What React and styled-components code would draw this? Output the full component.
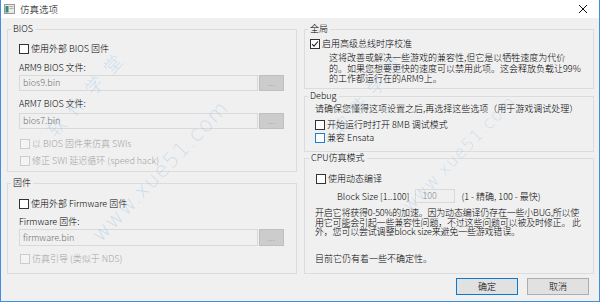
import React from "react";
import styled, { createGlobalStyle } from "styled-components";

const Global = createGlobalStyle`
  html, body { margin: 0; padding: 0; background: #ffffff; }
  body { font-family: "Noto Sans CJK SC", "Noto Sans", sans-serif; font-size: 9px; font-weight: 300; color: #000; }
  * { box-sizing: border-box; }
`;

const Window = styled.div`
  position: relative;
  width: 600px;
  height: 302px;
  border-left: 1px solid #3f8fdc;
  border-right: 1px solid #3f8fdc;
  border-bottom: 1px solid #3f8fdc;
  background: #f0f0f0;
  display: flex;
  flex-direction: column;
  overflow: hidden;
`;

const TitleBar = styled.div`
  height: 18px;
  background: #ffffff;
  display: flex;
  align-items: center;
  padding-left: 3px;
  flex: none;
`;

const TitleText = styled.span`
  margin-left: 5px;
  font-size: 9.5px;
  line-height: 18px;
  color: #000;
`;

const CloseBtn = styled.div`
  margin-left: auto;
  width: 30px;
  height: 18px;
  display: flex;
  align-items: center;
  justify-content: center;
  margin-right: 1px;
`;

const Body = styled.div`
  display: grid;
  grid-template-columns: 290px 290px;
  column-gap: 7px;
  padding: 11px 5px 0 6px;
`;

const Column = styled.div`
  display: flex;
  flex-direction: column;
`;

const Group = styled.div`
  border: 1px solid #dcdcdc;
  height: ${(p) => p.$h}px;
  margin-top: ${(p) => p.$mt || 0}px;
  display: flex;
  flex-direction: column;
  padding-left: ${(p) => p.$pl || 0}px;
`;

const Legend = styled.div`
  align-self: flex-start;
  margin: -7px 0 0 ${(p) => p.$ml ?? 3}px;
  padding: 0 2px;
  line-height: 12px;
  height: 12px;
  background: #f0f0f0;
  white-space: nowrap;
`;

const CheckRow = styled.label`
  display: flex;
  align-items: center;
  height: 12px;
  line-height: 12px;
  margin-top: ${(p) => p.$mt || 0}px;
  margin-left: ${(p) => p.$ml || 0}px;
  color: ${(p) => (p.$disabled ? "#a3a3a3" : "#000")};
  white-space: nowrap;
`;

const Box = styled.span`
  width: 10px;
  height: 10px;
  flex: none;
  border: 1px solid
    ${(p) => (p.$disabled ? "#cccccc" : p.$hot ? "#1c7fd8" : "#333333")};
  background: ${(p) => (p.$disabled ? "#f4f4f4" : "#ffffff")};
  margin-right: 2px;
  display: flex;
  align-items: center;
  justify-content: center;
`;

const FieldLabel = styled.div`
  height: 12px;
  line-height: 12px;
  margin-top: ${(p) => p.$mt || 0}px;
  white-space: nowrap;
`;

const FileRow = styled.div`
  display: flex;
  height: ${(p) => p.$h || 16}px;
  margin-top: ${(p) => p.$mt || 0}px;
  width: 265px;
`;

const TextInput = styled.div`
  flex: 1;
  border: 1px solid #d9d9d9;
  background: #f0f0f0;
  color: #6d6d6d;
  padding-left: 3px;
  display: flex;
  align-items: center;
  line-height: 12px;
  white-space: nowrap;
`;

const BrowseBtn = styled.div`
  width: 25px;
  margin-left: 1px;
  border: 1px solid #bfbfbf;
  background: #cccccc;
  color: #838383;
  font-size: 7px;
  display: flex;
  align-items: center;
  justify-content: center;
  letter-spacing: 0.5px;
`;

const Para = styled.div`
  margin-top: ${(p) => p.$mt || 0}px;
  margin-left: ${(p) => p.$ml || 0}px;
  line-height: ${(p) => p.$lh || 12}px;
  letter-spacing: ${(p) => p.$ls || 0}px;
  white-space: pre;
`;

const BlockRow = styled.div`
  display: flex;
  align-items: center;
  height: 14px;
  margin-top: ${(p) => p.$mt || 0}px;
  margin-left: ${(p) => p.$ml || 0}px;
  white-space: nowrap;
`;

const SmallInput = styled.div`
  width: 40px;
  height: 14px;
  margin-left: 6px;
  margin-right: 6px;
  border: 1px solid #d9d9d9;
  background: #f0f0f0;
  color: #8a8a8a;
  padding-left: 6px;
  line-height: 12px;
`;

const ButtonRow = styled.div`
  display: flex;
  justify-content: flex-end;
  gap: 9px;
  margin-top: 4px;
  padding-right: 5px;
`;

const Button = styled.div`
  width: 62px;
  height: 17px;
  background: #e1e1e1;
  border: 1px solid ${(p) => (p.$default ? "#0b78d6" : "#adadad")};
  display: flex;
  align-items: center;
  justify-content: center;
  line-height: 12px;
`;

const Watermark = styled.div`
  position: absolute;
  left: ${(p) => p.$x}px;
  top: ${(p) => p.$y}px;
  transform: rotate(${(p) => p.$r}deg);
  transform-origin: left center;
  font-family: "DejaVu Sans", "Noto Sans CJK SC", sans-serif;
  font-size: ${(p) => p.$fs}px;
  letter-spacing: ${(p) => p.$ls || 0}px;
  color: rgba(120, 180, 230, 0.32);
  white-space: nowrap;
  pointer-events: none;
  line-height: 1;
`;

const CheckMark = () => (
  <svg width="8" height="8" viewBox="0 0 8 8">
    <path d="M1 4.2 L3 6.2 L7 1.5" fill="none" stroke="#222" strokeWidth="1.1" />
  </svg>
);

const Check = ({ checked, disabled, hot, children, mt, ml }) => (
  <CheckRow $mt={mt} $ml={ml} $disabled={disabled}>
    <Box $disabled={disabled} $hot={hot}>
      {checked && <CheckMark />}
    </Box>
    {children}
  </CheckRow>
);

const AppIcon = () => (
  <svg width="11" height="10" viewBox="0 0 11 10">
    <rect x="0.5" y="0.5" width="10" height="9" fill="#e9e9e9" stroke="#9a9a9a" />
    <rect x="1.5" y="2" width="3" height="6.5" fill="#2f8f7d" />
    <rect x="5.5" y="2" width="4" height="1" fill="#b0b0b0" />
    <rect x="5.5" y="4" width="4" height="1" fill="#b0b0b0" />
  </svg>
);

const CloseIcon = () => (
  <svg width="10" height="10" viewBox="0 0 10 10">
    <path d="M1 1 L9 9 M9 1 L1 9" stroke="#111" strokeWidth="1" />
  </svg>
);

export default function App() {
  return (
    <>
      <Global />
      <Window>
        <TitleBar>
          <AppIcon />
          <TitleText>仿真选项</TitleText>
          <CloseBtn>
            <CloseIcon />
          </CloseBtn>
        </TitleBar>
        <Body>
          <Column>
            <Group $h={143} $pl={11}>
              <Legend $ml={-8}>BIOS</Legend>
              <Check mt={8}>使用外部 BIOS 固件</Check>
              <FieldLabel $mt={7}>ARM9 BIOS 文件:</FieldLabel>
              <FileRow $mt={1}>
                <TextInput>bios9.bin</TextInput>
                <BrowseBtn>...</BrowseBtn>
              </FileRow>
              <FieldLabel $mt={7}>ARM7 BIOS 文件:</FieldLabel>
              <FileRow $mt={3}>
                <TextInput>bios7.bin</TextInput>
                <BrowseBtn>...</BrowseBtn>
              </FileRow>
              <Check mt={9} ml={1} disabled>
                以 BIOS 固件来仿真 SWIs
              </Check>
              <Check mt={5} ml={1} disabled>
                修正 SWI 延迟循环 (speed hack)
              </Check>
            </Group>
            <Group $h={91} $mt={11} $pl={11}>
              <Legend $ml={-8}>固件</Legend>
              <Check mt={9}>使用外部 Firmware 固件</Check>
              <FieldLabel $mt={6}>Firmware 固件:</FieldLabel>
              <FileRow $mt={1} $h={17}>
                <TextInput>firmware.bin</TextInput>
                <BrowseBtn>...</BrowseBtn>
              </FileRow>
              <Check mt={7} ml={1} disabled>
                仿真引导 (类似于 NDS)
              </Check>
            </Group>
          </Column>
          <Column>
            <Group $h={60}>
              <Legend>全局</Legend>
              <Check mt={3} ml={5} checked>
                启用高级总线时序校准
              </Check>
              <Para $mt={3} $ml={24} $lh={10.5}>
                {"这将改善或解决一些游戏的兼容性,但它是以牺牲速度为代价\n的。如果您想要更快的速度可以禁用此项。这会释放负载让99%\n的工作都运行在的ARM9上。"}
              </Para>
            </Group>
            <Group $h={56} $mt={7}>
              <Legend>Debug</Legend>
              <Para $mt={1} $ml={10}>
                请确保您懂得这项设置之后,再选择这些选项（用于游戏调试处理）
              </Para>
              <Check mt={4} ml={10}>
                开始运行时打开 8MB 调试模式
              </Check>
              <Check mt={1} ml={10} hot>
                兼容 Ensata
              </Check>
            </Group>
            <Group $h={116} $mt={6}>
              <Legend $ml={4}>CPU仿真模式</Legend>
              <Check mt={9} ml={11}>
                使用动态编译
              </Check>
              <BlockRow $mt={4} $ml={32}>
                Block Size [1..100]
                <SmallInput>100</SmallInput>
                (1 - 精确, 100 - 最快)
              </BlockRow>
              <Para $mt={5} $ml={10} $lh={9.5} $ls={-0.2}>
                {"开启它将获得0-50%的加速。因为动态编译仍存在一些小BUG,所以使\n用它可能会引起一些兼容性问题，不过这些问题可以被及时修正。 此\n外，您可以尝试调整block size来避免一些游戏错误。"}
              </Para>
              <Para $mt={16} $ml={10}>
                目前它仍有着一些不确定性。
              </Para>
            </Group>
            <ButtonRow>
              <Button $default>确定</Button>
              <Button>取消</Button>
            </ButtonRow>
          </Column>
        </Body>
        <Watermark $x={95} $y={228} $r={-46} $fs={21} $ls={1}>
          www.xue51.com
        </Watermark>
        <Watermark $x={50} $y={125} $r={-48} $fs={18} $ls={10}>
          软件学堂
        </Watermark>
        <Watermark $x={405} $y={200} $r={-46} $fs={17} $ls={1}>
          www.xue51.com
        </Watermark>
        <Watermark $x={335} $y={123} $r={-48} $fs={17} $ls={9}>
          软件学堂
        </Watermark>
      </Window>
    </>
  );
}
